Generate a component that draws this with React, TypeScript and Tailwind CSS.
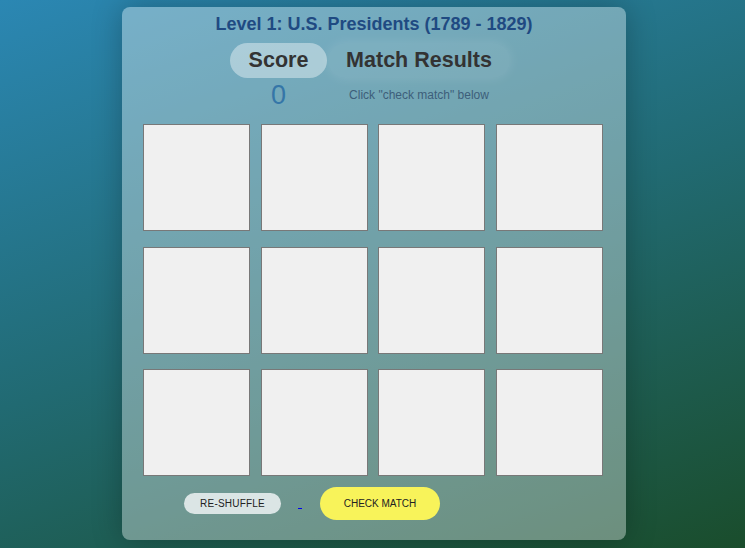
import React from "react";

export default function App() {
  const cards = Array.from({ length: 12 });
  return (
    <div
      className="w-[745px] h-[548px] overflow-hidden bg-[linear-gradient(160deg,#2b87b3_0%,#216a72_50%,#1a4d2c_100%)] pt-[7px]"
      style={{ fontFamily: '"Liberation Sans", Arial, sans-serif' }}
    >
      <div className="ml-[122px] w-[504px] h-[533px] rounded-lg bg-[rgba(255,255,255,0.36)] shadow-[0_0_30px_rgba(0,0,0,0.25)] flex flex-col items-center pt-[7px]">
        <h1 className="text-[18px] leading-[21px] font-bold text-[#1f4a82]">
          Level 1: U.S. Presidents (1789 - 1829)
        </h1>
        <div className="self-start ml-[108px] flex mt-[8px] h-[35px]">
          <div className="w-[97px] h-[35px] rounded-full bg-[rgba(255,255,255,0.4)] flex items-center justify-center text-[21.5px] font-bold text-[#333]">
            Score
          </div>
          <div className="ml-[1px] w-[182px] h-[35px] rounded-full bg-[rgba(255,255,255,0.06)] shadow-[0_0_12px_rgba(255,255,255,0.12)] flex items-center justify-center text-[21.5px] font-bold text-[#333]">
            Match Results
          </div>
        </div>
        <div className="self-start ml-[108px] flex h-[30px] mt-[2px]">
          <div className="w-[97px] flex items-center justify-center text-[27px] leading-[30px] text-[#3576a8]">
            0
          </div>
          <div className="ml-[1px] w-[182px] flex items-center justify-center text-[12px] text-[#3d5e7a]">
            Click "check match" below
          </div>
        </div>
        <div className="mt-[14px] ml-[-2px] w-[460px] grid grid-cols-[repeat(4,107px)] justify-between gap-y-[15.5px]">
          {cards.map((_, i) => (
            <div
              key={i}
              className="w-[107px] h-[107px] bg-[#f0f0f0] border border-[#787878]"
            />
          ))}
        </div>
        <div className="self-start ml-[62px] mt-[11px] flex items-center h-[33px]">
          <button className="w-[97px] h-[21px] rounded-full bg-[#dbe5e5] text-[10px] text-[#222] tracking-[0.2px]">
            RE-SHUFFLE
          </button>
          <span className="block ml-[17px] mt-[9px] w-[4px] h-[1px] bg-[#0000ee]" />
          <button className="ml-[18px] w-[120px] h-[33px] rounded-full bg-[#f8f35a] text-[10px] text-[#222]">
            CHECK MATCH
          </button>
        </div>
      </div>
    </div>
  );
}
